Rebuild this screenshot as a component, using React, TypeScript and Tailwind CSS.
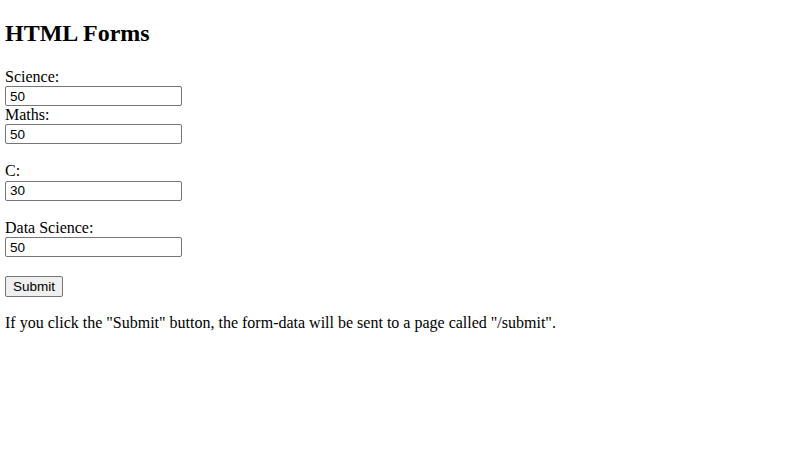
import React from 'react';

const fields = [
    { label: 'Science:', value: '50', gap: false },
    { label: 'Maths:', value: '50', gap: false },
    { label: 'C:', value: '30', gap: true },
    { label: 'Data Science:', value: '50', gap: true },
];

const App: React.FC = () => {
    return (
        <div className="min-h-[461px] bg-white pl-[5px] text-black font-['Liberation_Serif',serif] text-[16px]">
            <h2 className="pt-[19.5px] mb-[20.5px] text-[24px] leading-[27.6px] font-bold">HTML Forms</h2>

            <form className="flex flex-col items-start" onSubmit={(e) => e.preventDefault()}>
                {fields.map((f) => (
                    <React.Fragment key={f.label}>
                        {f.gap && <div className="h-[18.6px]"></div>}
                        <label className="block h-[18.6px] leading-[18.4px]">{f.label}</label>
                        <div className="h-[19.4px] flex items-start">
                            <input
                                type="text"
                                defaultValue={f.value}
                                className="w-[177px] h-[20px] px-[4px] border border-[#767676] rounded-[2px] bg-white text-black font-['Liberation_Sans',Arial,sans-serif] text-[13.5px] leading-none outline-none"
                            />
                        </div>
                    </React.Fragment>
                ))}
                <div className="h-[19.6px]"></div>
                <button
                    type="submit"
                    className="w-[58px] h-[21px] border border-[#767676] rounded-[2px] bg-[#efefef] text-black font-['Liberation_Sans',Arial,sans-serif] text-[13.5px] leading-none"
                >
                    Submit
                </button>
            </form>

            <p className="mt-[17px] leading-[18.4px]">
                If you click the "Submit" button, the form-data will be sent to a page called "/submit".
            </p>
        </div>
    );
};

export default App;
